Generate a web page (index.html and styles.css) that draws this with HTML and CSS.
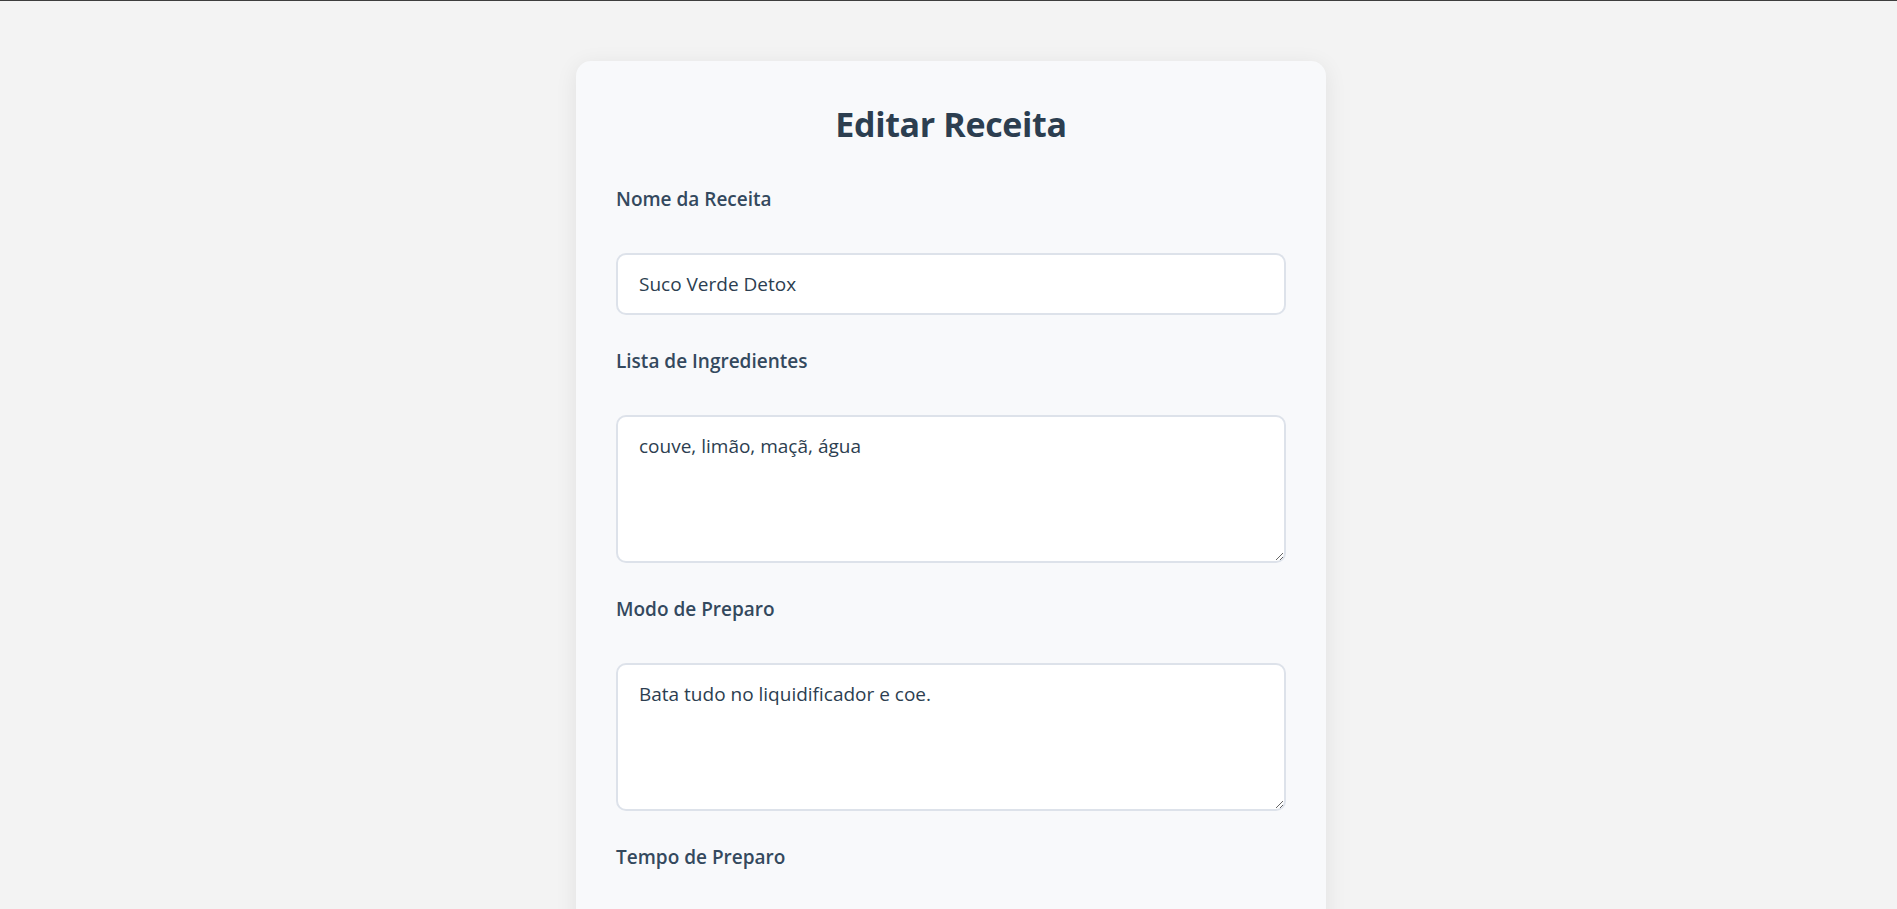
FILE: index.html
```html
<!DOCTYPE html>
<html lang="pt-BR">
<head>
<meta charset="utf-8">
<title>Editar Receita</title>
<link rel="stylesheet" href="styles.css">
</head>
<body>
<div class="topline"></div>
<main class="page">
  <form class="card">
    <h2 class="card-title">Editar Receita</h2>
    <div class="field">
      <label class="field-label" for="nome">Nome da Receita</label>
      <input class="field-input" id="nome" type="text" value="Suco Verde Detox">
    </div>
    <div class="field">
      <label class="field-label" for="ingredientes">Lista de Ingredientes</label>
      <textarea class="field-input field-area" id="ingredientes">couve, limão, maçã, água</textarea>
    </div>
    <div class="field">
      <label class="field-label" for="preparo">Modo de Preparo</label>
      <textarea class="field-input field-area" id="preparo">Bata tudo no liquidificador e coe.</textarea>
    </div>
    <div class="field">
      <label class="field-label" for="tempo">Tempo de Preparo</label>
      <input class="field-input" id="tempo" type="text" value="10 minutos">
    </div>
    <button class="submit" type="button">Salvar Alterações</button>
  </form>
</main>
</body>
</html>
```

FILE: styles.css
```css
html, body {
  margin: 0;
  padding: 0;
}

body {
  background: #f3f3f3;
  font-family: "Open Sans", "Noto Sans", "Liberation Sans", sans-serif;
  color: #2c3e50;
}

.topline {
  height: 1px;
  background: #3d3d3d;
}

.page {
  display: flex;
  justify-content: center;
  padding: 60px 0 40px 5px;
}

.card {
  width: 750px;
  box-sizing: border-box;
  background: #f8f9fb;
  border-radius: 15px;
  box-shadow: 0 4px 22px rgba(0, 0, 0, 0.08);
  padding: 40px 40px 40px;
  display: flex;
  flex-direction: column;
}

.card-title {
  margin: 0 0 40px;
  text-align: center;
  font-size: 34px;
  font-weight: 700;
  letter-spacing: -0.35px;
  color: #2c3e50;
  line-height: 46px;
}

.field {
  display: flex;
  flex-direction: column;
  margin-bottom: 34px;
}

.field-label {
  display: block;
  font-size: 19px;
  font-weight: 600;
  line-height: 25px;
  color: #34495e;
  margin-bottom: 41px;
}

.field-input {
  display: block;
  width: 100%;
  box-sizing: border-box;
  font-family: "Open Sans", "Noto Sans", "Liberation Sans", sans-serif;
  font-size: 19px;
  line-height: 26px;
  color: #2c3e50;
  background: #ffffff;
  border: 2px solid #dde2ea;
  border-radius: 10px;
  padding: 16px 18px 16px 21px;
  margin: 0;
  outline: none;
}

.field-area {
  height: 148px;
  resize: vertical;
}

.submit {
  align-self: stretch;
  font-family: "Open Sans", "Noto Sans", "Liberation Sans", sans-serif;
  font-size: 19px;
  font-weight: 600;
  color: #ffffff;
  background: #27ae60;
  border: none;
  border-radius: 10px;
  padding: 16px;
}
```
